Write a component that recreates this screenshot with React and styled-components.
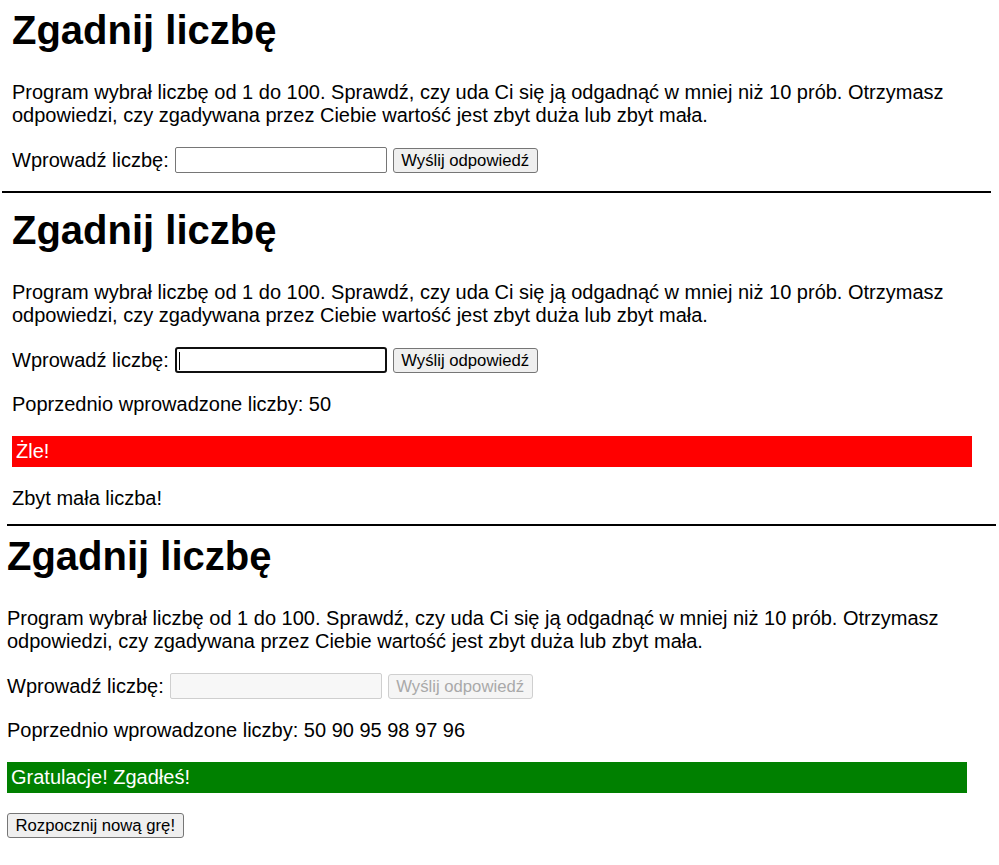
import React from "react";
import styled, { createGlobalStyle, css } from "styled-components";

const INTRO =
    "Program wybrał liczbę od 1 do 100. Sprawdź, czy uda Ci się ją odgadnąć w mniej niż 10 prób. Otrzymasz odpowiedzi, czy zgadywana przez Ciebie wartość jest zbyt duża lub zbyt mała.";

const ekrany = [
    { id: 1, indent: 12, stan: "start", liczby: [], focus: false, linia: { left: 2, top: 18, bottom: 14 } },
    { id: 2, indent: 12, stan: "zle", liczby: [50], focus: true, linia: { left: 7, top: 14, bottom: 7 } },
    { id: 3, indent: 7, stan: "wygrana", liczby: [50, 90, 95, 98, 97, 96], focus: false, linia: null }
];

const Gra = ({ indent, stan, liczby, focus }) => {
    const koniec = stan === "wygrana";

    return (
        <Section $indent={indent}>
            <Title>Zgadnij liczbę</Title>
            <Intro>{INTRO}</Intro>
            <FormRow>
                <Label htmlFor={`liczba-${indent}-${stan}`}>Wprowadź liczbę:</Label>
                <NumberInput
                    id={`liczba-${indent}-${stan}`}
                    type="text"
                    $focus={focus}
                    disabled={koniec}
                    readOnly
                />
                <SubmitButton disabled={koniec}>Wyślij odpowiedź</SubmitButton>
            </FormRow>

            {liczby.length > 0 && (
                <Line>Poprzednio wprowadzone liczby: {liczby.join(" ")}</Line>
            )}

            {stan === "zle" && (
                <>
                    <Banner $ok={false}>Żle!</Banner>
                    <Line>Zbyt mała liczba!</Line>
                </>
            )}

            {koniec && (
                <>
                    <Banner $ok>Gratulacje! Zgadłeś!</Banner>
                    <RestartButton>Rozpocznij nową grę!</RestartButton>
                </>
            )}
        </Section>
    );
};

const App = () => (
    <>
        <GlobalStyle />
        <Page>
            {ekrany.map((e) => (
                <React.Fragment key={e.id}>
                    <Gra {...e} />
                    {e.linia && (
                        <Divider $left={e.linia.left} $top={e.linia.top} $bottom={e.linia.bottom} />
                    )}
                </React.Fragment>
            ))}
        </Page>
    </>
);

const GlobalStyle = createGlobalStyle`
    html, body {
        margin: 0;
        padding: 0;
        background: #fff;
    }
    body {
        font-family: "Liberation Sans", Arial, sans-serif;
        font-size: 20px;
        color: #000;
    }
`;

const Page = styled.div`
    padding-top: 7px;
`;

const Section = styled.section`
    width: 960px;
    padding-left: ${(p) => p.$indent}px;
`;

const Title = styled.h1`
    margin: 0 0 28px;
    font-size: 40px;
    font-weight: 700;
    line-height: 46px;
`;

const Intro = styled.p`
    margin: 0 0 20px;
    line-height: 23px;
`;

const FormRow = styled.div`
    display: flex;
    align-items: center;
    gap: 6px;
    height: 26px;
`;

const Label = styled.label`
    line-height: 23px;
`;

const NumberInput = styled.input`
    box-sizing: border-box;
    width: 212px;
    height: 26px;
    margin: 0;
    padding: 0 3px;
    border: 1px solid #767676;
    border-radius: 2px;
    background: #fff;
    font: 16.7px "Liberation Sans", Arial, sans-serif;
    outline: none;

    ${(p) =>
        p.$focus &&
        css`
            border: 2px solid #101010;
            border-radius: 3px;
            background: linear-gradient(#000, #000) no-repeat 2px 3px / 1px 18px, #fff;
        `}

    &:disabled {
        border-color: #cfcfcf;
        background: #f7f7f7;
    }
`;

const buttonBase = css`
    box-sizing: border-box;
    margin: 0;
    height: 25px;
    padding: 0 7.5px;
    border: 1px solid #767676;
    border-radius: 3px;
    background: #efefef;
    color: #000;
    font: 16.7px "Liberation Sans", Arial, sans-serif;
    line-height: 21px;
    white-space: nowrap;
`;

const SubmitButton = styled.button`
    ${buttonBase}

    &:disabled {
        border-color: #cfcfcf;
        background: #f5f5f5;
        color: #a9a9a9;
    }
`;

const RestartButton = styled.button`
    ${buttonBase}
    display: block;
    margin-top: 20px;
`;

const Line = styled.p`
    margin: 20px 0 0;
    line-height: 23px;
`;

const Banner = styled.div`
    margin-top: 20px;
    padding: 4px 4px;
    background: ${(p) => (p.$ok ? "#008000" : "#ff0000")};
    color: #fff;
    line-height: 23px;
`;

const Divider = styled.hr`
    box-sizing: border-box;
    width: 989px;
    height: 2px;
    margin: ${(p) => p.$top}px 0 ${(p) => p.$bottom}px ${(p) => p.$left}px;
    border: 0;
    background: #000;
`;

export default App;
